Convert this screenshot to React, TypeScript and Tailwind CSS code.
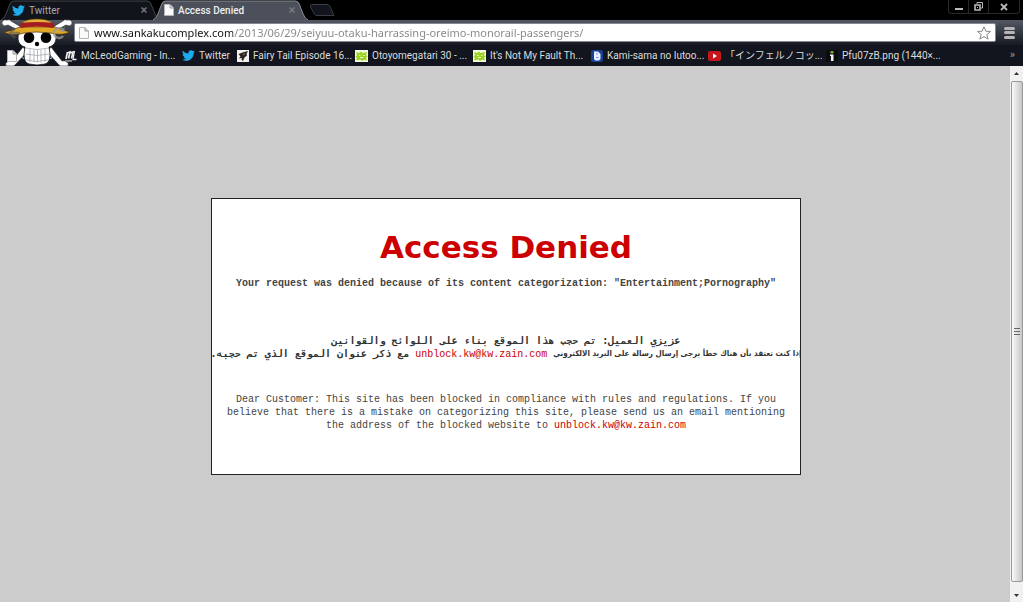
import type { ReactNode } from "react";

const ui = "font-['Roboto','Noto_Sans_CJK_JP',sans-serif]";
const mono = "font-['Liberation_Mono',monospace]";

function TwitterBird({ className }: { className: string }) {
  return (
    <svg viewBox="0 0 24 24" className={className} fill="#1dabec" aria-hidden="true">
      <path d="M23.95 4.57a10 10 0 0 1-2.82.77 4.96 4.96 0 0 0 2.16-2.72c-.95.55-2 .95-3.13 1.18a4.92 4.92 0 0 0-8.38 4.48C7.69 8.1 4.07 6.13 1.64 3.16a4.82 4.82 0 0 0-.67 2.48c0 1.7.87 3.2 2.19 4.1a4.9 4.9 0 0 1-2.23-.62v.06a4.92 4.92 0 0 0 3.95 4.83 5 5 0 0 1-2.21.08 4.94 4.94 0 0 0 4.6 3.42A9.87 9.87 0 0 1 0 19.54a13.99 13.99 0 0 0 7.55 2.21c9.05 0 14-7.5 14-13.98l-.02-.64a9.93 9.93 0 0 0 2.42-2.56z" />
    </svg>
  );
}

function PageIcon() {
  return (
    <svg viewBox="0 0 10 12" className="h-3 w-[10px] shrink-0" aria-hidden="true">
      <path d="M.5.5h5.5l3.5 3.5v7.5h-9z" fill="#fafafa" stroke="#b4b4b4" />
      <path d="M6 .5v3.5h3.5" fill="#ddd" stroke="#999" />
    </svg>
  );
}

function McLeodIcon() {
  return (
    <svg viewBox="0 0 12 12" className="size-3 shrink-0" fill="none" stroke="#eee" aria-hidden="true">
      <path d="M1 9l1.500-7M2 3l3-1-1.500 6.500M5 3l3-1-1.500 6.500" strokeWidth="1.700" />
      <path d="M9.500 1L8 9.500h3.500" strokeWidth="1.300" />
      <path d="M0 11h7" />
    </svg>
  );
}

function FairyIcon() {
  return (
    <svg viewBox="0 0 12 12" className="size-3 shrink-0" aria-hidden="true">
      <path d="M0 0h12v12H0z" fill="#f4f2ee" />
      <path d="M1.500 4l4-1.500L11 1 9.500 4l.5 1.500-2.500 2L6 11l-1.500-1L5 8 2 8.500l1.500-2z" fill="#2b2422" />
      <path d="M6 5l2-1.500" stroke="#b88" strokeWidth=".8" />
    </svg>
  );
}

function GreenIcon() {
  return (
    <svg viewBox="0 0 13 12" className="h-3 w-[13px] shrink-0" aria-hidden="true">
      <path d="M0 0h13v12H0z" fill="#f4f9e4" />
      <path d="M1 2l3 1 2-1.500L7.500 3 12 2l-1 3 1.500 1.500L11 8l1 2.500-3-.8L7 11l-1.500-1.500L1 10.500 2 8 .5 6.500 2 5z" fill="#9bd11f" />
      <path d="M4 5.500h1.500M8 5.500h1.500M5 7.500h3" stroke="#eef8cc" />
    </svg>
  );
}

function BlueIcon() {
  return (
    <svg viewBox="0 0 12 12" className="size-3 shrink-0" aria-hidden="true">
      <rect width="12" height="12" rx="2" fill="#173f94" />
      <path d="M3 1.500h4L9.500 4v5L8 10.500H4L3 9z" fill="#e8f0ff" />
      <path d="M5 4h2M5 7.500h2.500" stroke="#6f96dd" />
    </svg>
  );
}

function VideoIcon() {
  return (
    <svg viewBox="0 0 13 12" className="h-3 w-[13px] shrink-0" aria-hidden="true">
      <rect y="1" width="13" height="10" rx="2" fill="#c4161c" />
      <path d="M5 3.500v5L9 6z" fill="#fff" />
    </svg>
  );
}

function ManIcon() {
  return (
    <svg viewBox="0 0 12 12" className="size-3 shrink-0" aria-hidden="true">
      <path d="M0 0h12v12H0z" fill="#0b0c0f" />
      <path d="M4.500 1h3v2.500h-3z" fill="#6fae2e" />
      <path d="M4 4.500h3.500V11H5V6H4z" fill="#f4f4f4" />
    </svg>
  );
}

function StrawHatSkull() {
  return (
    <svg viewBox="0 0 76 48" className="pointer-events-none absolute top-[18px] left-0 h-12 w-[76px]" aria-hidden="true">
      <g stroke="#222" strokeWidth=".6" fill="#fff">
        <path d="M2 4q1-3 5-2 3-1 4 1l12 7-2 4L8 7 5 8Q1 7 2 4zM72 4q-1-3-5-2-3-1-4 1l-12 7 2 4 13-7 3 1q4-1 3-4z" />
        <path d="M23 29l4 5L14 48H6q-1-3 1-4 3-2 5-1zM51 29l-4 5 13 14h8q1-3-1-4-3-2-5-1z" />
      </g>
      <path d="M37 8c13 0 19 4 19 12 0 5-3 8-7 9l1 7q0 9-5 10-8 2-16 0-5-1-5-10l1-7c-4-1-7-4-7-9C18 12 24 8 37 8z" fill="#fff" stroke="#151515" strokeWidth=".8" />
      <ellipse cx="29" cy="19.500" rx="5.300" ry="5.500" fill="#050505" />
      <ellipse cx="46" cy="19.500" rx="5.300" ry="5.500" fill="#050505" />
      <circle cx="37" cy="26" r="2.200" fill="#050505" />
      <path d="M26 30q11 3 23 0M25.500 36q11 3 23.500 0M26.500 42q10.500 3 21.500 0M30 31v13M34 31.500v13M37.500 31.500v13M41 31.500v13M45 31v13" fill="none" stroke="#9c9fa6" strokeWidth=".7" />
      <path d="M4 14q8-1 18-6h31q8 4 17 6-8 4-20 1-14-2-26 0-12 4-20-1z" fill="#dfa725" stroke="#4e3209" strokeWidth=".7" />
      <path d="M22 5q4-4 15-4t15 4l1 4H21z" fill="#e5b03a" stroke="#5b3b0b" strokeWidth=".6" />
      <path d="M21 5q16-2 32 0l1 5q-17-3-34 0z" fill="#a51b20" />
    </svg>
  );
}

function TabButton({ icon, title, active }: { icon: ReactNode; title: string; active?: boolean }) {
  return (
    <div className={active ? "relative -ml-2 h-5 w-[156px]" : "relative h-5 w-[160px]"}>
      <svg viewBox="0 0 160 20" preserveAspectRatio="none" className="absolute inset-0 size-full" aria-hidden="true">
        <path d="M1 20Q4 19 6 14L10 4Q11 1 14 1H147Q150 1 151 4L155 14Q157 19 160 20" fill={active ? "#4c505b" : "#12141c"} stroke={active ? "#8a8c94" : "#44464e"} />
      </svg>
      <div className="relative flex h-5 items-center gap-1 px-3">
        <button className={active ? "flex grow items-center gap-1 text-left text-[10px] font-medium text-[#eee]" : "flex grow items-center gap-1 text-left text-[10px] text-[#a8a9ad]"}>
          {icon}
          {title}
        </button>
        <button aria-label={`Close ${title}`}>
          <svg viewBox="0 0 8 8" className="size-2" stroke="#777980" strokeWidth="1.500" aria-hidden="true"><path d="M1.500 1.500l5 5m0-5l-5 5" /></svg>
        </button>
      </div>
    </div>
  );
}

const bookmarks = [
  { label: "McLeodGaming - In...", icon: <McLeodIcon />, width: "w-[117px]" },
  { label: "Twitter", icon: <TwitterBird className="size-[13px] shrink-0" />, width: "w-[55px]" },
  { label: "Fairy Tail Episode 16...", icon: <FairyIcon />, width: "w-[118px]" },
  { label: "Otoyomegatari 30 - ...", icon: <GreenIcon />, width: "w-[118px]" },
  { label: "It's Not My Fault Th...", icon: <GreenIcon />, width: "w-[118px]" },
  { label: "Kami-sama no Iutoo...", icon: <BlueIcon />, width: "w-[117px]" },
  { label: "「インフェルノコッ...", icon: <VideoIcon />, width: "w-[118px]" },
  { label: "Pfu07zB.png (1440×...", icon: <ManIcon />, width: "w-[117px]" },
];

function BrowserChrome() {
  return (
    <header className={`relative bg-black ${ui}`}>
      <div className="flex h-5 items-stretch">
        <TabButton icon={<TwitterBird className="size-[13px]" />} title="Twitter" />
        <TabButton icon={<PageIcon />} title="Access Denied" active />
        <button aria-label="New tab" className="ml-px">
          <svg viewBox="0 0 26 12" className="h-3 w-[26px]" aria-hidden="true">
            <path d="M3 .5h15q2 0 3 2l4 9H8q-2 0-3-2L1.500 3Q1 .5 3 .5z" fill="#12141d" stroke="#3b3d46" />
          </svg>
        </button>
        <div className="mr-[3px] ml-auto flex h-[14px] self-start rounded-b-sm border border-t-0 border-[#292929] text-[#b9b9b9]">
          <button aria-label="Minimize" className="flex w-5 items-center justify-center border-r border-[#292929]">
            <svg viewBox="0 0 8 8" className="size-2" aria-hidden="true"><path d="M0 5h8v2H0z" fill="currentColor" /></svg>
          </button>
          <button aria-label="Restore" className="flex w-5 items-center justify-center border-r border-[#292929]">
            <svg viewBox="0 0 9 9" className="size-[9px]" fill="none" stroke="currentColor" aria-hidden="true"><path d="M3 2V.5h5.500V6H7" /><path d="M1 3h5v5H1z" strokeWidth="1.600" /><path d="M3 5.500h1" /></svg>
          </button>
          <button aria-label="Close" className="flex w-[30px] items-center justify-center">
            <svg viewBox="0 0 8 8" className="size-2" stroke="currentColor" strokeWidth="1.800" aria-hidden="true"><path d="M1 1l6 6m0-6L1 7" /></svg>
          </button>
        </div>
      </div>
      <div className="flex h-[25px] items-center gap-2 bg-linear-to-b from-[#555965] to-[#171a22] pr-1 pl-[7px]">
        <div className="relative z-10 flex w-[59px] shrink-0 items-center justify-between text-[#9a9b9e]">
          <button aria-label="Back">
            <svg viewBox="0 0 14 12" className="h-3 w-[14px]" fill="none" stroke="#555861" strokeOpacity=".6" strokeWidth="2.500" aria-hidden="true"><path d="M13 6H3m5-5L3 6l5 5" /></svg>
          </button>
          <button aria-label="Reload">
            <svg viewBox="0 0 14 14" className="size-[14px]" fill="none" stroke="currentColor" strokeWidth="2.500" opacity=".75" aria-hidden="true"><path d="M11 10a5 5 0 1 1 0-6" /><path d="M12.500 1v5h-5z" fill="currentColor" stroke="none" /></svg>
          </button>
        </div>
        <div className="flex h-[19px] min-w-0 grow items-center gap-1 rounded-xs border border-[#858790] bg-white px-1">
          <PageIcon />
          <input
            aria-label="Address"
            defaultValue="www.sankakucomplex.com/2013/06/29/seiyuu-otaku-harrassing-oreimo-monorail-passengers/"
            className="ml-px h-4 min-w-0 grow bg-linear-to-r from-[#111] from-[139px] to-[#858585] to-[139px] bg-clip-text font-['Noto_Sans',sans-serif] text-[11px] leading-4 text-transparent outline-none"
          />
          <button aria-label="Bookmark this page">
            <svg viewBox="0 0 14 14" className="size-[14px]" fill="#fff" stroke="#888" strokeLinejoin="round" aria-hidden="true"><path d="M7 .8l1.800 4.400 4.700.3-3.600 3 1.200 4.600L7 10.600l-4.100 2.500 1.200-4.600-3.600-3 4.700-.3z" /></svg>
          </button>
        </div>
        <button aria-label="Menu" className="mr-1 flex h-3 w-[11px] flex-col justify-between">
          <span className="h-[3px] w-full rounded-xs bg-[#b5b5b8]" />
          <span className="h-[3px] w-full rounded-xs bg-[#b5b5b8]" />
          <span className="h-[3px] w-full rounded-xs bg-[#b5b5b8]" />
        </button>
      </div>
      <nav className="flex h-[21px] items-center bg-[#12151d] pr-2 pl-[7px] text-[10px] whitespace-nowrap text-[#dcdcdf]">
        <a href="#games" className="flex w-[58px] shrink-0 items-center gap-1">
          <span className="relative z-10"><PageIcon /></span>
          Games
        </a>
        {bookmarks.map((b) => (
          <a key={b.label} href="#bookmark" className={`flex shrink-0 items-center gap-1 ${b.width}`}>
            {b.icon}
            {b.label}
          </a>
        ))}
        <button aria-label="More bookmarks" className="ml-auto text-[11px] text-[#96979b]">»</button>
      </nav>
      <StrawHatSkull />
    </header>
  );
}

function Scrollbar() {
  return (
    <div className="flex w-[13px] shrink-0 flex-col items-center bg-[#f1f1f1]" aria-hidden="true">
      <svg viewBox="0 0 7 15" className="h-[15px] w-[7px]"><path d="M1 9l2.500-3L6 9z" fill="#333" /></svg>
      <div className="flex w-3 grow items-center justify-center rounded-xs border border-[#999] bg-linear-to-r from-[#fafafa] to-[#c6c7cb]">
        <svg viewBox="0 0 6 7" className="h-[7px] w-[6px]" stroke="#666"><path d="M0 .5h6M0 3.500h6M0 6.500h6" /></svg>
      </div>
      <svg viewBox="0 0 7 20" className="h-5 w-[7px]"><path d="M1 12l2.500 3L6 12z" fill="#333" /></svg>
    </div>
  );
}

function Email() {
  return <a href="mailto:unblock.kw@kw.zain.com" className={`text-[#c00] ${mono}`}>unblock.kw@kw.zain.com</a>;
}

export default function App() {
  return (
    <div className="flex min-h-screen flex-col bg-[#ccc]">
      <BrowserChrome />
      <div className="flex grow">
        <main className="flex min-w-0 grow items-center justify-center pt-1 pl-0.5">
          <section className={`w-full max-w-[590px] overflow-hidden border border-[#222] bg-white pt-7 pb-[42px] text-center text-[10px] leading-[13px] text-[#333] ${mono}`}>
            <h1 className="font-['DejaVu_Sans',sans-serif] text-[31px] leading-10 font-bold text-[#c00]">Access Denied</h1>
            <p className="mt-[10px] font-bold text-[#444]">Your request was denied because of its content categorization: "Entertainment;Pornography"</p>
            <div dir="rtl" lang="ar" className="mt-11 font-['DejaVu_Sans_Mono',monospace] font-bold">
              <p>عزيزي العميل: تم حجب هذا الموقع بناء على اللوائح والقوانين</p>
              <p className="flex items-center justify-center gap-[6px] whitespace-nowrap">
                <span className="font-['DejaVu_Sans_Condensed','DejaVu_Sans',sans-serif] text-[8px] leading-[13px]">إذا كنت تعتقد بأن هناك خطأ يرجى إرسال رسالة على البريد الالكتروني</span>
                <span className="font-normal"><Email /></span>
                <span>مع ذكر عنوان الموقع الذي تم حجبه.</span>
              </p>
            </div>
            <p className="mt-8 px-1 text-[#444]">
              Dear Customer: This site has been blocked in compliance with rules and regulations. If you believe that there is a mistake on categorizing this site, please send us an email mentioning the address of the blocked website to <Email />
            </p>
          </section>
        </main>
        <Scrollbar />
      </div>
    </div>
  );
}
